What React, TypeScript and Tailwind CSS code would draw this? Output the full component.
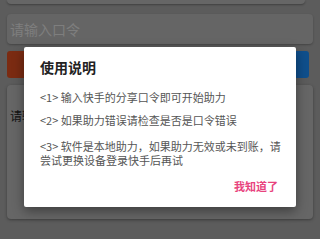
import React from "react";

export default function App() {
  return (
    <div
      className="relative h-[239px] w-[320px] overflow-hidden bg-[#999999]"
      style={{ fontFamily: '"Noto Sans CJK SC", "Noto Sans", sans-serif' }}
    >
      {/* underlying page */}
      <div className="flex flex-col px-[7px]">
        <div className="h-[4px] w-[298px] rounded-b-[4px] bg-[#aaaaaa] shadow-[0_1px_2px_rgba(0,0,0,0.3)]" />
        <div className="mt-[10px] flex h-[30px] items-center rounded-[4px] bg-[#a8a8a8] px-[3px] shadow-[0_1px_2px_rgba(0,0,0,0.25)]">
          <span className="text-[14px] leading-none text-[#d2d2d2]">请输入口令</span>
        </div>
        <div className="mt-[7px] flex h-[27px] gap-[8px] pr-[4px]">
          <div className="flex-1 rounded-[3px] bg-[#cd491e]" />
          <div className="flex-1 rounded-[3px] bg-[#1984e9]" />
        </div>
        <div className="mt-[7px] flex h-[134px] flex-col rounded-[4px] bg-[#aaaaaa] px-[3px] pt-[25px] shadow-[0_1px_3px_rgba(0,0,0,0.35)]">
          <span className="w-[14px] overflow-hidden whitespace-nowrap text-[12px] leading-none text-[#222]">请输入口令</span>
        </div>
      </div>

      {/* overlay */}
      <div className="absolute inset-0 flex justify-center bg-black/40 pt-[47px]">
        <div className="flex h-[160px] w-[272px] flex-col rounded-[2px] bg-white pl-[16px] pr-[10px] pt-[12px] shadow-[0_4px_12px_rgba(0,0,0,0.4)]">
          <div className="text-[14px] font-bold leading-[16px] text-[#222]">使用说明</div>
          <div className="mt-[15px] flex flex-col text-[11px] leading-[14px] text-[#555]">
            <p className="whitespace-nowrap">&lt;1&gt; 输入快手的分享口令即可开始助力</p>
            <p className="mt-[9px] whitespace-nowrap">&lt;2&gt; 如果助力错误请检查是否是口令错误</p>
            <p className="mt-[12px]">
              <span className="whitespace-nowrap">&lt;3&gt; 软件是本地助力，如果助力无效或未到账，请</span>
              <br />
              尝试更换设备登录快手后再试
            </p>
          </div>
          <div className="mt-[12px] flex justify-end pr-[8px]">
            <span className="text-[11px] font-bold leading-[14px] text-[#e8437d]">我知道了</span>
          </div>
        </div>
      </div>
    </div>
  );
}
